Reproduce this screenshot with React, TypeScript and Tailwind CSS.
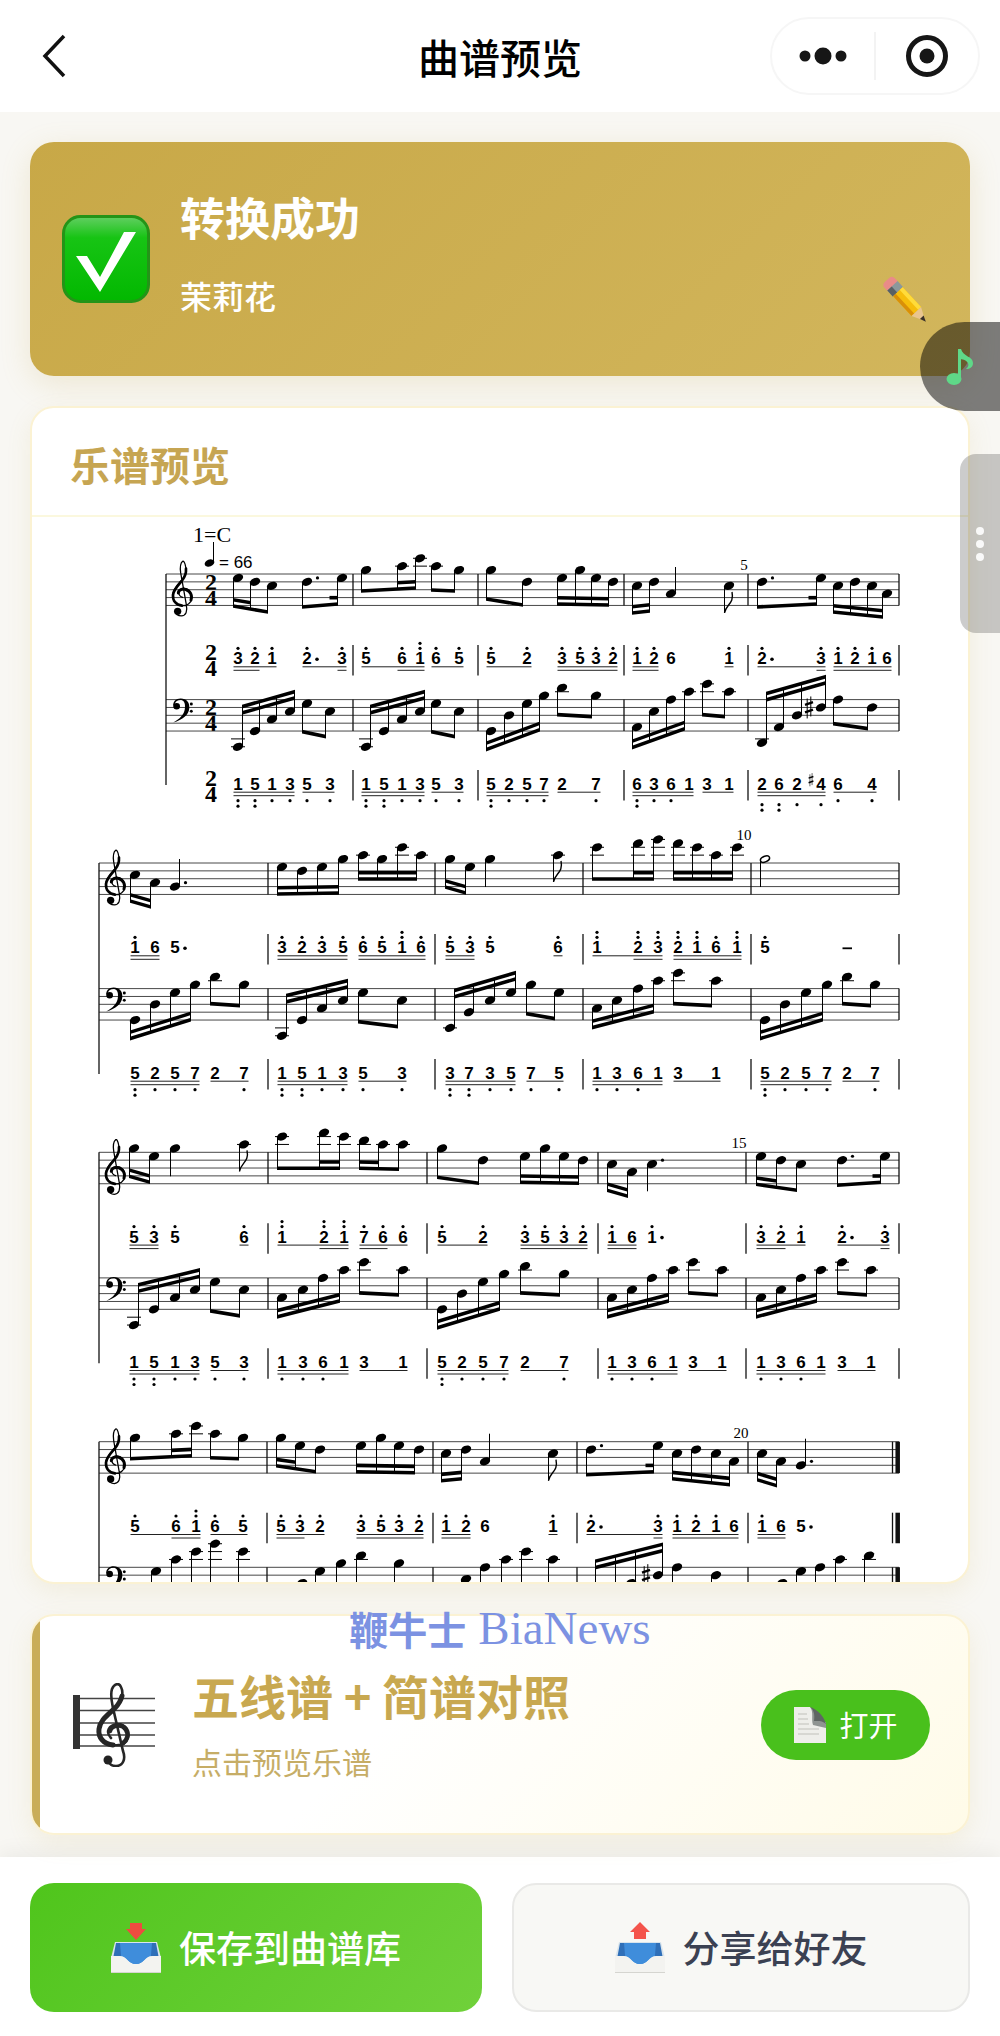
import type { ReactNode } from "react";

type Group = {
  // "x:pitch" tokens. ' raises an octave, "," lowers one, "." is a dotted note, # is a sharp
  notes: string;
  // stem ends, measured from the top line of the staff
  ends: [number, number];
  // notes that share the second beam
  second?: [number, number];
  up?: boolean;
  flag?: boolean;
  plain?: boolean;
  half?: boolean;
  lowDots?: boolean;
};

type System = {
  y: number;
  left: number;
  bars: number[];
  label: { x: number; rise: number; text: string };
  final?: boolean;
  treble: Group[];
  bass: Group[];
};

const STEP = 3.93;
const RIGHT = 899;
const BASS_OFFSET = 125.6;

const SYSTEMS: System[] = [
  {
    y: 574,
    left: 166,
    bars: [353, 478, 624, 748],
    label: { x: 744, rise: 4, text: "5" },
    treble: [
      { notes: "238:3' 255:2' 272:1'", ends: [32, 38], second: [0, 1] },
      { notes: "307:2'. 342:3'", ends: [33, 30], second: [1, 1] },
      { notes: "366:5' 402:6' 420:1''", ends: [17, 14], second: [1, 2] },
      { notes: "436:6' 459:5'", ends: [16, 17] },
      { notes: "491:5' 527:2'", ends: [25, 31] },
      { notes: "562:3' 580:5' 596:3' 613:2'", ends: [30, 31], second: [0, 3] },
      { notes: "637:1' 654:2'", ends: [39, 37], second: [0, 1] },
      { notes: "671:6", ends: [-7, -7], up: true, plain: true },
      { notes: "729:1'", ends: [39, 39], flag: true },
      { notes: "762:2'. 821:3'", ends: [33, 30], second: [1, 1] },
      { notes: "838:1' 855:2' 872:1' 887:6", ends: [38, 43], second: [0, 3] },
    ],
    bass: [
      { notes: "238:1,, 255:5,, 272:1, 290:3,", ends: [7, -8], second: [0, 3], up: true },
      { notes: "307:5, 330:3,", ends: [32, 37] },
      { notes: "366:1,, 384:5,, 402:1, 420:3,", ends: [7, -8], second: [0, 3], up: true },
      { notes: "436:5, 459:3,", ends: [32, 37] },
      { notes: "491:5,, 509:2, 527:5, 544:7,", ends: [50, 30], second: [0, 3] },
      { notes: "562:2 596:7,", ends: [15, 17] },
      { notes: "637:6,, 654:3, 671:6, 689:1", ends: [48, 29], second: [0, 3] },
      { notes: "707:3 729:1", ends: [15, 17] },
      { notes: "762:2,, 779:6,, 797:2, 821:#4,", ends: [-6, -23], second: [0, 3], up: true, lowDots: true },
      { notes: "838:6, 872:4,", ends: [24, 29] },
    ],
  },
  {
    y: 863,
    left: 99,
    bars: [268, 435, 583, 751],
    label: { x: 744, rise: 23, text: "10" },
    treble: [
      { notes: "135:1' 155:6", ends: [38, 44], second: [0, 1] },
      { notes: "175:5.", ends: [-4, -4], up: true, plain: true },
      { notes: "282:3' 302:2' 322:3' 343:5'", ends: [31, 30], second: [0, 3] },
      { notes: "363:6' 382:5' 402:1'' 421:6'", ends: [16, 16], second: [0, 3] },
      { notes: "450:5' 470:3'", ends: [24, 30], second: [0, 1] },
      { notes: "490:5'", ends: [24, 24], plain: true },
      { notes: "558:6'", ends: [19, 19], flag: true },
      { notes: "597:1'' 638:2'' 658:3''", ends: [16, 16], second: [1, 2] },
      { notes: "678:2'' 697:1'' 716:6' 737:1''", ends: [16, 16], second: [0, 3] },
      { notes: "765:5'", ends: [24, 24], half: true, plain: true },
    ],
    bass: [
      { notes: "135:5,, 155:2, 175:5, 195:7,", ends: [50, 31], second: [0, 3] },
      { notes: "215:2 244:7,", ends: [15, 17] },
      { notes: "282:1,, 302:5,, 322:1, 343:3,", ends: [7, -8], second: [0, 3], up: true },
      { notes: "363:5, 402:3,", ends: [33, 38] },
      { notes: "450:3,, 469:7,, 490:3, 511:5,", ends: [2, -16], second: [0, 3], up: true },
      { notes: "531:7, 559:5,", ends: [25, 30] },
      { notes: "597:1, 617:3, 638:6, 658:1", ends: [39, 23], second: [0, 3] },
      { notes: "678:3 716:1", ends: [15, 17] },
      { notes: "765:5,, 785:2, 806:5, 827:7,", ends: [50, 31], second: [0, 3] },
      { notes: "847:2 875:7,", ends: [15, 17] },
    ],
  },
  {
    y: 1152.3,
    left: 99,
    bars: [268, 427, 598, 746],
    label: { x: 739, rise: 4, text: "15" },
    treble: [
      { notes: "134:5' 154:3'", ends: [24, 30], second: [0, 1] },
      { notes: "175:5'", ends: [24, 24], plain: true },
      { notes: "244:6'", ends: [19, 19], flag: true },
      { notes: "282:1'' 324:2'' 344:1''", ends: [16, 16], second: [1, 2] },
      { notes: "364:7' 383:6' 403:6'", ends: [16, 17], second: [0, 1] },
      { notes: "442:5' 483:2'", ends: [25, 31] },
      { notes: "525:3' 545:5' 564:3' 583:2'", ends: [30, 31], second: [0, 3] },
      { notes: "612:1' 632:6", ends: [38, 44], second: [0, 1] },
      { notes: "652:1'.", ends: [39, 39], plain: true },
      { notes: "761:3' 781:2' 801:1'", ends: [32, 38], second: [0, 1] },
      { notes: "842:2'. 885:3'", ends: [33, 30], second: [1, 1] },
    ],
    bass: [
      { notes: "134:1,, 154:5,, 175:1, 195:3,", ends: [7, -8], second: [0, 3], up: true },
      { notes: "215:5, 244:3,", ends: [33, 38] },
      { notes: "282:1, 303:3, 323:6, 344:1", ends: [39, 23], second: [0, 3] },
      { notes: "364:3 403:1", ends: [15, 17] },
      { notes: "442:5,, 462:2, 483:5, 504:7,", ends: [50, 31], second: [0, 3] },
      { notes: "525:2 564:7,", ends: [15, 17] },
      { notes: "612:1, 632:3, 652:6, 673:1", ends: [39, 23], second: [0, 3] },
      { notes: "693:3 722:1", ends: [15, 17] },
      { notes: "761:1, 781:3, 801:6, 821:1", ends: [39, 23], second: [0, 3] },
      { notes: "842:3 871:1", ends: [15, 17] },
    ],
  },
  {
    y: 1441.7,
    left: 99,
    bars: [267, 433, 577, 748],
    label: { x: 741, rise: 4, text: "20" },
    final: true,
    treble: [
      { notes: "135:5' 176:6' 196:1''", ends: [17, 14], second: [1, 2] },
      { notes: "215:6' 243:5'", ends: [16, 17] },
      { notes: "281:5' 300:3' 320:2'", ends: [24, 30], second: [0, 1] },
      { notes: "361:3' 381:5' 399:3' 419:2'", ends: [30, 31], second: [0, 3] },
      { notes: "446:1' 466:2'", ends: [39, 37], second: [0, 1] },
      { notes: "485:6", ends: [-8, -8], up: true, plain: true },
      { notes: "553:1'", ends: [39, 39], flag: true },
      { notes: "591:2'. 658:3'", ends: [33, 30], second: [1, 1] },
      { notes: "677:1' 696:2' 716:1' 734:6", ends: [37, 43], second: [0, 3] },
      { notes: "762:1' 781:6", ends: [38, 44], second: [0, 1] },
      { notes: "801:5.", ends: [-3, -3], up: true, plain: true },
    ],
    bass: [
      { notes: "156:5, 176:1 196:3", ends: [40, 30] },
      { notes: "215:5 243:3", ends: [30, 32] },
      { notes: "302:2, 320:5, 341:7,", ends: [40, 31] },
      { notes: "361:2 399:7,", ends: [22, 24] },
      { notes: "466:3, 485:6, 506:1", ends: [42, 29] },
      { notes: "526:3 553:1", ends: [22, 24] },
      { notes: "591:2,, 611:6,, 631:2, 658:#4,", ends: [-6, -23], second: [0, 3], up: true },
      { notes: "677:6, 716:4,", ends: [24, 29] },
      { notes: "782:2, 801:5, 820:6, 840:1", ends: [40, 28] },
      { notes: "869:2", ends: [28, 28], plain: true },
    ],
  },
];

function parseNotes(text: string) {
  return text.split(" ").map((token) => {
    const [x, pitch] = token.split(":");
    const up = (pitch.match(/'/g) ?? []).length;
    const down = (pitch.match(/,/g) ?? []).length;
    return {
      x: Number(x),
      digit: Number(pitch.replace(/[^0-9]/g, "")),
      octave: up - down,
      dotted: pitch.includes("."),
      sharp: pitch.includes("#"),
    };
  });
}

function Sharp({ x, y, scale }: { x: number; y: number; scale: number }) {
  return (
    <g transform={`translate(${x} ${y}) scale(${scale})`} stroke="#000" fill="none">
      <path d="M-1.8 -9V11M1.8 -11V9" strokeWidth="1" />
      <path d="M-4 -2.6L4 -5.4M-4 5L4 2.2" strokeWidth="2.4" />
    </g>
  );
}

function TrebleClef() {
  return (
    <g fill="none" stroke="#000" strokeLinecap="round">
      <path
        d="M50 70C36 66 34 48 48 44C66 40 80 54 78 72C76 88 62 96 48 95C30 93 19 80 20 63C22 44 36 32 48 18C58 6 62 -10 59 -22C57 -34 53 -40 50 -38C43 -32 42 -18 44 -4L61 92C65 112 60 125 46 126C36 126 28 120 28 112"
        strokeWidth="3.8"
      />
      <path d="M48 95C30 93 20 80 21 63C23 46 36 34 48 20C57 9 61 -4 60 -16" strokeWidth="8" />
      <path d="M37 57C38 47 50 43 60 47C74 53 79 66 75 78" strokeWidth="9" />
      <circle cx="35" cy="112" r="11" fill="#000" stroke="none" />
    </g>
  );
}

function BassClef() {
  return (
    <g>
      <path
        d="M22 20C20 6 30 -3 44 -3C62 -3 71 9 70 25C69 46 50 60 22 69C42 58 56 44 57 24C58 9 53 1 43 1C35 1 28 6 27 12Z"
        fill="#000"
      />
      <circle cx="32" cy="20" r="10" fill="#000" />
      <circle cx="76" cy="13" r="4.5" fill="#000" />
      <circle cx="76" cy="35" r="4.5" fill="#000" />
    </g>
  );
}

function StaffGroup({ group, top, base }: { group: Group; top: number; base: number }) {
  const notes = parseNotes(group.notes);
  const first = notes[0].x;
  const last = notes[notes.length - 1].x;
  const side = group.up ? 4.5 : -4.5;
  const endAt = (x: number) =>
    top + (last === first ? group.ends[0] : group.ends[0] + ((group.ends[1] - group.ends[0]) * (x - first)) / (last - first));
  const beam = (from: number, to: number, shift: number) => (
    <path
      d={`M${from + side - 0.5} ${endAt(from) + shift - 1.8}L${to + side + 0.5} ${endAt(to) + shift - 1.8}v3.6L${from + side - 0.5} ${endAt(from) + shift + 1.8}z`}
    />
  );
  const inner = group.up ? 6.3 : -6.3;

  return (
    <g>
      {notes.map((note) => {
        const position = base - 7 * note.octave - note.digit;
        const y = top + position * STEP;
        const ledgers: number[] = [];
        for (let p = -2; p >= position; p -= 2) ledgers.push(p);
        for (let p = 10; p <= position; p += 2) ledgers.push(p);
        return (
          <g key={note.x}>
            {ledgers.map((p) => (
              <path key={p} d={`M${note.x - 7} ${top + p * STEP}h14`} stroke="#000" />
            ))}
            <ellipse
              cx={note.x}
              cy={y}
              rx={group.half ? 4.8 : 5.4}
              ry={group.half ? 2.8 : 3.8}
              transform={`rotate(-24 ${note.x} ${y})`}
              fill={group.half ? "#fff" : "#000"}
              stroke={group.half ? "#000" : "none"}
              strokeWidth="1.4"
            />
            <path d={`M${note.x + side} ${y}V${endAt(note.x)}`} stroke="#000" />
            {note.dotted && <circle cx={note.x + 10.5} cy={y - STEP} r="1.6" />}
            {note.sharp && <Sharp x={note.x - 12} y={y} scale={1} />}
          </g>
        );
      })}
      {notes.length > 1 && beam(first, last, 0)}
      {notes.length > 1 && group.second && group.second[0] !== group.second[1] &&
        beam(notes[group.second[0]].x, notes[group.second[1]].x, inner)}
      {group.second && group.second[0] === group.second[1] && (
        <rect x={last + side - 8} y={endAt(last) + inner - 1.8} width="8" height="3.6" />
      )}
      {group.flag && (
        <path
          d={`M${first + side} ${endAt(first)}c1.5 -9 10 -9 7.5 -21`}
          fill="none"
          stroke="#000"
          strokeWidth="1.4"
        />
      )}
    </g>
  );
}

function NumberGroup({ group, baseline }: { group: Group; baseline: number }) {
  const notes = parseNotes(group.notes);
  const first = notes[0].x;
  const last = notes[notes.length - 1].x;
  const dotsTop = baseline + (group.lowDots ? 15 : 11);
  return (
    <g>
      {notes.map((note) => (
        <g key={note.x}>
          <text x={note.x} y={baseline} textAnchor="middle" className="font-['Liberation_Sans',sans-serif] text-[17px] font-bold">
            {note.digit}
          </text>
          {note.octave > 0 && <circle cx={note.x} cy={baseline - 16} r="1.6" />}
          {note.octave > 1 && <circle cx={note.x} cy={baseline - 21} r="1.6" />}
          {note.octave < 0 && <circle cx={note.x} cy={dotsTop} r="1.6" />}
          {note.octave < -1 && <circle cx={note.x} cy={dotsTop + 5.5} r="1.6" />}
          {note.dotted && <circle cx={note.x + 10} cy={baseline - 5} r="1.8" />}
          {note.sharp && <Sharp x={note.x - 10} y={baseline - 10} scale={0.6} />}
        </g>
      ))}
      {!group.plain && <path d={`M${first - 4.5} ${baseline + 2.5}H${last + 4.5}`} stroke="#222" />}
      {group.second && (
        <path
          d={`M${notes[group.second[0]].x - 4.5} ${baseline + 6}H${notes[group.second[1]].x + 4.5}`}
          stroke="#222"
        />
      )}
      {group.half && <path d={`M842.5 ${baseline - 5}h9.5`} stroke="#000" strokeWidth="1.8" />}
    </g>
  );
}

function TimeSignature({ y }: { y: number }) {
  return (
    <text y={y + 16} textAnchor="middle" className="font-['Liberation_Serif',serif] text-[24px] font-bold">
      <tspan x="211">2</tspan>
      <tspan x="211" dy="16">4</tspan>
    </text>
  );
}

function ScoreSystem({ system }: { system: System }) {
  const treble = system.y;
  const bass = system.y + BASS_OFFSET;
  const spans: [number, number][] = [
    [treble, treble + 8 * STEP],
    [treble + 71, treble + 101.5],
    [bass, bass + 8 * STEP],
    [treble + 196, treble + 226.5],
  ];
  return (
    <g>
      {[treble, bass].map((top) =>
        [0, 2, 4, 6, 8].map((p) => (
          <path key={`${top}-${p}`} d={`M${system.left} ${top + p * STEP}H${RIGHT}`} stroke="#333" strokeWidth="0.9" />
        )),
      )}
      <path d={`M${system.left} ${treble}V${treble + 211}`} stroke="#111" strokeWidth="1.3" />
      {spans.map(([from, to]) => (
        <g key={from} stroke="#111" strokeWidth="1.3">
          {system.bars.map((x) => (
            <path key={x} d={`M${x} ${from}V${to}`} />
          ))}
          {system.final ? (
            <>
              <path d={`M892.5 ${from}V${to}`} />
              <path d={`M897.7 ${from}V${to}`} strokeWidth="4.5" />
            </>
          ) : (
            <path d={`M${RIGHT} ${from}V${to}`} />
          )}
        </g>
      ))}
      <g transform={`translate(${system.left} ${treble}) scale(0.333)`}>
        <TrebleClef />
      </g>
      <g transform={`translate(${system.left} ${bass}) scale(0.333)`}>
        <BassClef />
      </g>
      <text
        x={system.label.x}
        y={treble - system.label.rise}
        textAnchor="middle"
        className="font-['Liberation_Serif',serif] text-[15px]"
      >
        {system.label.text}
      </text>
      {system.treble.map((group) => (
        <g key={group.notes}>
          <StaffGroup group={group} top={treble} base={11} />
          <NumberGroup group={group} baseline={treble + 90.3} />
        </g>
      ))}
      {system.bass.map((group) => (
        <g key={group.notes}>
          <StaffGroup group={group} top={bass} base={-1} />
          {!system.final && <NumberGroup group={group} baseline={treble + 215.7} />}
        </g>
      ))}
    </g>
  );
}

function Score() {
  return (
    <svg viewBox="32 517 936 1065" className="block w-full" role="img" aria-label="茉莉花">
      <text x="193" y="542" className="font-['Liberation_Serif',serif] text-[22px]">1=C</text>
      <ellipse cx="209.5" cy="563" rx="5" ry="3.5" transform="rotate(-20 209.5 563)" />
      <path d="M213.5 562V542" stroke="#000" />
      <text x="219" y="568" className="font-['Liberation_Sans',sans-serif] text-[17px]">= 66</text>
      {[574, 644, 699, 770].map((y) => (
        <TimeSignature key={y} y={y} />
      ))}
      {SYSTEMS.map((system) => (
        <ScoreSystem key={system.y} system={system} />
      ))}
    </svg>
  );
}

function CheckIcon() {
  return (
    <svg viewBox="0 0 88 88" className="size-[88px] shrink-0" aria-hidden="true">
      <defs>
        <linearGradient id="check" x1="0" y1="0" x2="0" y2="1">
          <stop offset="0" stopColor="#63cf63" />
          <stop offset="0.25" stopColor="#17c414" />
          <stop offset="1" stopColor="#02b800" />
        </linearGradient>
      </defs>
      <rect x="1.5" y="1.5" width="85" height="85" rx="17" fill="url(#check)" stroke="#249418" strokeWidth="3" />
      <path d="M14 41H25L38 62L62 17H74L38 77Z" fill="#fff" />
    </svg>
  );
}

function PencilIcon() {
  return (
    <svg viewBox="0 0 46 46" className="size-[46px]" aria-hidden="true">
      <g transform="translate(5 4) rotate(47)">
        <rect x="0" y="-7" width="11" height="14" rx="4" fill="#e98b88" />
        <rect x="8" y="-7" width="8" height="14" fill="#8b989b" />
        <path d="M8 1H16V7H8Z" fill="#596064" />
        <path d="M16 -6.5H43V6.5H16Z" fill="#f6bd0b" />
        <path d="M16 -6.5H43V-2.5H16Z" fill="#ffdb3a" />
        <path d="M16 3H43V6.5H16Z" fill="#d98f08" />
        <path d="M43 -6.5L56 0L43 6.5Z" fill="#e9c58f" />
        <path d="M51 -2.5L57 0L51 2.5Z" fill="#3a3028" />
      </g>
    </svg>
  );
}

function StaffIcon() {
  return (
    <svg viewBox="0 0 84 84" className="size-[84px] shrink-0" aria-hidden="true">
      <path d="M6 15.5H83M6 27.5H83M6 40H83M6 52H83M6 63H83" stroke="#444" strokeWidth="1.4" />
      <rect x="1" y="12" width="7" height="54" fill="#333" />
      <g fill="none" stroke="#262626" strokeLinecap="round">
        <path
          d="M39 55C33 49 37 42 45 41C54 41 58 48 56 55C54 61 48 63 41 62C31 61 26 54 27 46C28 37 36 32 43 25C50 18 52 10 49 4C47 -1 42 1 40 6C38 12 40 20 41 25L51 68C54 76 51 83 44 83C40 83 37 81 37 78"
          strokeWidth="2.6"
        />
        <path d="M41 62C31 61 26 54 27 46C28 37 36 32 43 25C47 21 49 17 50 13" strokeWidth="5" />
        <path d="M38 48C40 42 50 40 54 47C57 52 55 57 51 60" strokeWidth="4.4" />
      </g>
      <circle cx="36" cy="77" r="4.5" fill="#222" />
    </svg>
  );
}

function PageIcon() {
  return (
    <svg viewBox="0 0 34 38" className="h-[38px] w-[34px]" aria-hidden="true">
      <path d="M1 1H17L33 17V37H1Z" fill="#eeeeea" />
      <path d="M17 1C21 6 18 13 20 19L33 22V17C27 14 24 4 17 1Z" fill="#8f9492" />
      <path d="M17 1C24 3 31 10 33 18C29 14 24 15 21 15C22 9 21 4 17 1Z" fill="#5f6563" />
      <path d="M5 8H14M5 13H15M5 18H16M5 23H26M5 28H26" stroke="#cfcfca" strokeWidth="1.5" />
    </svg>
  );
}

function TrayIcon({ out }: { out?: boolean }) {
  return (
    <svg viewBox="0 0 50 52" className="h-[52px] w-[50px]" aria-hidden="true">
      <path d="M4 20H46L50 36H0Z" fill="#d9e4ec" />
      <path d="M5 21H45L48 37H2Z" fill="#2f6fb8" />
      <path d="M9 21H41L39 45H11Z" fill="#3f8ddb" />
      <path d="M0 34H9C16 34 17 42 25 42S34 34 41 34H50V51H0Z" fill="#f3f3f0" />
      <path d="M11 34C16 34 17 42 25 42S34 34 39 34Z" fill="#3f8ddb" />
      <path d="M0 50.5H50" stroke="#d5d5d0" />
      {out ? (
        <path d="M25 0L35 10H31V17H19V10H15Z" fill="#f4544c" />
      ) : (
        <path d="M19 1H31V7H35L25 18L15 7H19Z" fill="#ee4b40" />
      )}
    </svg>
  );
}

function Card({ children, className }: { children: ReactNode; className: string }) {
  return (
    <section className={`relative overflow-hidden rounded-[24px] border-2 border-[#fbf2d3] shadow-[0_8px_24px_rgba(200,170,80,0.12)] ${className}`}>
      {children}
    </section>
  );
}

export default function App() {
  return (
    <div className="relative flex min-h-screen flex-col bg-[#f8f7f3] font-['Noto_Sans_CJK_SC',sans-serif]">
      <header className="grid h-28 grid-cols-3 items-center bg-white px-5">
        <button type="button" aria-label="返回" className="justify-self-start pl-5">
          <svg viewBox="0 0 28 44" className="h-11 w-7" fill="none" stroke="#111" strokeWidth="3.5">
            <path d="M24 2L5 22L24 42" />
          </svg>
        </button>
        <h1 className="justify-self-center text-[41px] leading-none font-medium text-black">曲谱预览</h1>
        <div className="flex h-[78px] w-[210px] items-center justify-self-end rounded-full border-2 border-[#f6f6f6]">
          <button type="button" aria-label="更多" className="flex flex-1 justify-center">
            <svg viewBox="0 0 48 18" className="h-[18px] w-12" fill="#161616">
              <circle cx="6" cy="9" r="5.5" />
              <circle cx="24" cy="9" r="8.5" />
              <circle cx="42" cy="9" r="5.5" />
            </svg>
          </button>
          <span className="h-12 w-0.5 bg-[#f3f3f3]" />
          <button type="button" aria-label="关闭" className="flex flex-1 justify-center">
            <svg viewBox="0 0 44 44" className="size-11">
              <circle cx="22" cy="22" r="18.5" fill="none" stroke="#161616" strokeWidth="5" />
              <circle cx="22" cy="22" r="7.5" fill="#161616" />
            </svg>
          </button>
        </div>
      </header>

      <main className="flex flex-1 flex-col gap-[30px] px-[30px] pt-[30px] pb-[22px]">
        <section className="flex h-[234px] items-center gap-[30px] rounded-[24px] bg-linear-135 from-[#c8a847] to-[#d2b65c] px-8 shadow-[0_8px_30px_rgba(200,170,80,0.2)]">
          <CheckIcon />
          <div className="flex flex-1 flex-col gap-5 pb-2 text-white">
            <h2 className="text-[45px] leading-[60px] font-bold">转换成功</h2>
            <p className="text-[32px] leading-[56px] font-medium">茉莉花</p>
          </div>
          <button type="button" aria-label="编辑" className="mt-20 mr-2.5">
            <PencilIcon />
          </button>
        </section>

        <Card className="bg-white">
          <h2 className="flex h-[109px] items-center border-b-2 border-[#fbf8de] px-[38px] pt-1 text-[40px] leading-none font-bold text-[#c6a552]">
            乐谱预览
          </h2>
          <Score />
        </Card>

        <div className="relative">
          <Card className="bg-linear-135 from-white from-40% to-[#fffbe8]">
            <div className="flex h-[217px] items-center border-l-8 border-[#c9ad57] pr-[38px] pl-8">
              <StaffIcon />
              <div className="flex flex-1 flex-col gap-3 pb-1 pl-9">
                <h2 className="text-[47px] leading-[64px] font-bold text-[#c8a850]">五线谱 + 简谱对照</h2>
                <p className="text-[30px] leading-[44px] text-[#c6ad66]">点击预览乐谱</p>
              </div>
              <button type="button" className="flex h-[70px] w-[169px] items-center justify-center gap-3 rounded-full bg-[#49c01c] text-[29px] leading-none text-white">
                <PageIcon />
                打开
              </button>
            </div>
          </Card>
          <p className="pointer-events-none absolute inset-x-0 -top-4 flex items-center justify-center gap-3 leading-[60px] whitespace-nowrap text-[#7c92e2]">
            <span className="text-[39px] font-bold">鞭牛士</span>
            <span className="font-['Liberation_Serif',serif] text-[47px]">BiaNews</span>
          </p>
        </div>
      </main>

      <footer className="grid grid-cols-[452fr_458fr] gap-[30px] bg-white px-[30px] pt-[26px] pb-6 text-[37px] leading-none font-medium shadow-[0_-4px_20px_rgba(0,0,0,0.06)]">
        <button type="button" className="flex h-[129px] items-center justify-center gap-[18px] rounded-[24px] bg-linear-135 from-[#4fc51b] to-[#70d13a] text-white">
          <TrayIcon />
          保存到曲谱库
        </button>
        <button type="button" className="flex h-[129px] items-center justify-center gap-[18px] rounded-[24px] border-2 border-[#e9e9e7] bg-[#f8f8f5] text-[#3b4152]">
          <TrayIcon out />
          分享给好友
        </button>
      </footer>

      <button type="button" aria-label="音乐" className="absolute top-[322px] right-0 flex h-[89px] w-20 items-center justify-center rounded-l-full bg-black/50">
        <svg viewBox="0 0 30 38" className="h-[38px] w-[30px]" aria-hidden="true">
          <path d="M14.5 1V30" stroke="#5fd888" strokeWidth="3" />
          <path d="M13 1H16C18 9 28 8 28 15C28 19 25 21 21 21C27 16 21 11 14 11Z" fill="#5fd888" />
          <ellipse cx="9" cy="31" rx="7.5" ry="6" fill="#5fd888" />
        </svg>
      </button>
      <button type="button" aria-label="展开" className="absolute top-[454px] right-0 flex h-[179px] w-10 flex-col items-center justify-center gap-[5px] rounded-l-2xl bg-black/20">
        <span className="size-2 rounded-full bg-white/90" />
        <span className="size-2 rounded-full bg-white/90" />
        <span className="size-2 rounded-full bg-white/90" />
      </button>
    </div>
  );
}
